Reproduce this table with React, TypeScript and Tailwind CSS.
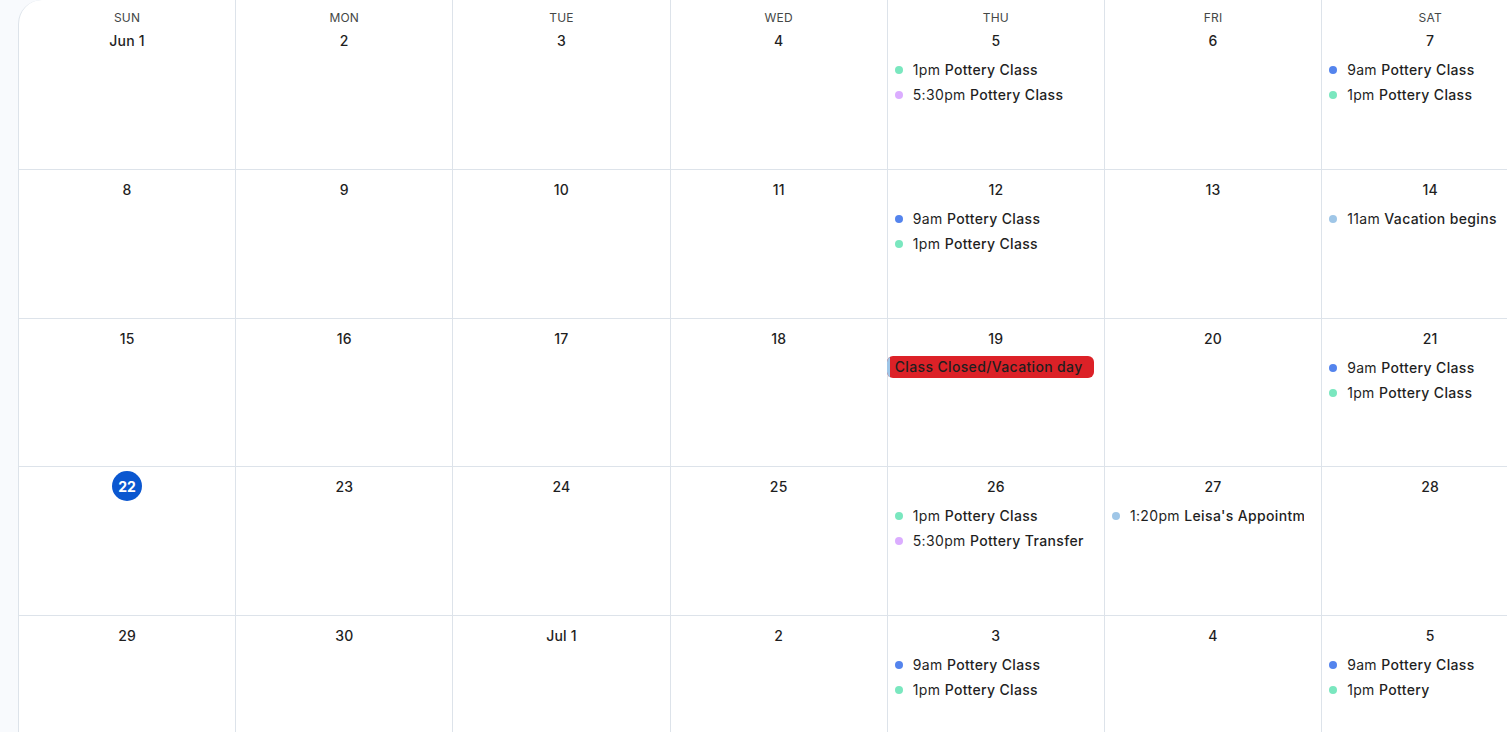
import React from "react";

type Ev = { color: string; time: string; title: string; block?: boolean };
type Cell = { label: string; today?: boolean; events?: Ev[] };

const TEAL = "#7ae7bf";
const PURPLE = "#dbadff";
const BLUE = "#5484ed";
const LIGHT = "#9fc6e7";

const days = ["SUN", "MON", "TUE", "WED", "THU", "FRI", "SAT"];

const pc = (color: string, time: string, title = "Pottery Class"): Ev => ({ color, time, title });

const weeks: Cell[][] = [
  [
    { label: "Jun 1" },
    { label: "2" },
    { label: "3" },
    { label: "4" },
    { label: "5", events: [pc(TEAL, "1pm"), pc(PURPLE, "5:30pm")] },
    { label: "6" },
    { label: "7", events: [pc(BLUE, "9am"), pc(TEAL, "1pm")] },
  ],
  [
    { label: "8" },
    { label: "9" },
    { label: "10" },
    { label: "11" },
    { label: "12", events: [pc(BLUE, "9am"), pc(TEAL, "1pm")] },
    { label: "13" },
    { label: "14", events: [pc(LIGHT, "11am", "Vacation begins")] },
  ],
  [
    { label: "15" },
    { label: "16" },
    { label: "17" },
    { label: "18" },
    { label: "19", events: [{ color: LIGHT, time: "", title: "Class Closed/Vacation day", block: true }] },
    { label: "20" },
    { label: "21", events: [pc(BLUE, "9am"), pc(TEAL, "1pm")] },
  ],
  [
    { label: "22", today: true },
    { label: "23" },
    { label: "24" },
    { label: "25" },
    { label: "26", events: [pc(TEAL, "1pm"), pc(PURPLE, "5:30pm", "Pottery Transfer")] },
    { label: "27", events: [pc(LIGHT, "1:20pm", "Leisa's Appointment")] },
    { label: "28" },
  ],
  [
    { label: "29" },
    { label: "30" },
    { label: "Jul 1" },
    { label: "2" },
    { label: "3", events: [pc(BLUE, "9am"), pc(TEAL, "1pm")] },
    { label: "4" },
    { label: "5", events: [pc(BLUE, "9am"), pc(TEAL, "1pm", "Pottery")] },
  ],
];

const rowHeights = ["h-[170px]", "h-[149px]", "h-[148px]", "h-[149px]", "h-[149px]"];

function EventRow({ ev }: { ev: Ev }) {
  if (ev.block) {
    return (
      <div className="h-[25px] -mt-[1px] flex items-center">
        <div className="ml-[-1px] mr-[10px] flex-1 h-[22px] rounded-[6px] bg-[#dc2127] flex items-stretch overflow-hidden">
          <div className="w-[3px] bg-[#9fc6e7]" />
          <div className="pl-[5px] flex items-center text-[14px] font-medium tracking-[0.35px] text-[#1f1f1f] whitespace-nowrap overflow-hidden">
            {ev.title}
          </div>
        </div>
      </div>
    );
  }
  return (
    <div className="h-[25px] flex items-center pl-[7px] pr-[17px] overflow-hidden whitespace-nowrap">
      <span className="w-[8px] h-[8px] rounded-full shrink-0" style={{ backgroundColor: ev.color }} />
      <span className="ml-[10px] text-[14px] tracking-[0.35px] text-[#1f1f1f] overflow-hidden">
        <span className="font-normal">{ev.time}</span> <span className="font-medium">{ev.title}</span>
      </span>
    </div>
  );
}

export default function App() {
  return (
    <div
      className="w-[1507px] h-[732px] overflow-hidden bg-[#f8fafd] flex"
      style={{ fontFamily: "Inter, 'Noto Sans', Arial, sans-serif" }}
    >
      <div className="w-[18px] shrink-0" />
      <div className="flex-1 overflow-hidden bg-white rounded-tl-[24px] border-l border-[#dde3ea]">
        <div className="grid grid-cols-[repeat(7,217.2px)] w-[1521px]">
          {weeks.map((week, wi) =>
            week.map((cell, di) => (
              <div
                key={`${wi}-${di}`}
                className={`${rowHeights[wi]} border-r border-b border-[#dde3ea] flex flex-col ${wi === 0 ? "pt-[22px]" : "pt-[1px]"} relative`}
              >
                {wi === 0 && (
                  <div className="absolute top-0 left-0 right-0 h-[22px] pt-[10px] text-center text-[12px] font-normal tracking-[0.2px] text-[#444746] leading-[15px]">
                    {days[di]}
                  </div>
                )}
                <div className="h-[33px] pt-[3px] flex justify-center">
                  {cell.today ? (
                    <div className="w-[30px] h-[30px] rounded-full bg-[#0b57d0] text-white text-[14px] font-bold flex items-center justify-center">
                      {cell.label}
                    </div>
                  ) : (
                    <div className="h-[30px] flex items-center text-[14px] font-medium tracking-[0.2px] text-[#1f1f1f]">{cell.label}</div>
                  )}
                </div>
                <div className="mt-[2px] flex flex-col">
                  {(cell.events || []).map((ev, i) => (
                    <EventRow key={i} ev={ev} />
                  ))}
                </div>
              </div>
            ))
          )}
        </div>
      </div>
    </div>
  );
}
